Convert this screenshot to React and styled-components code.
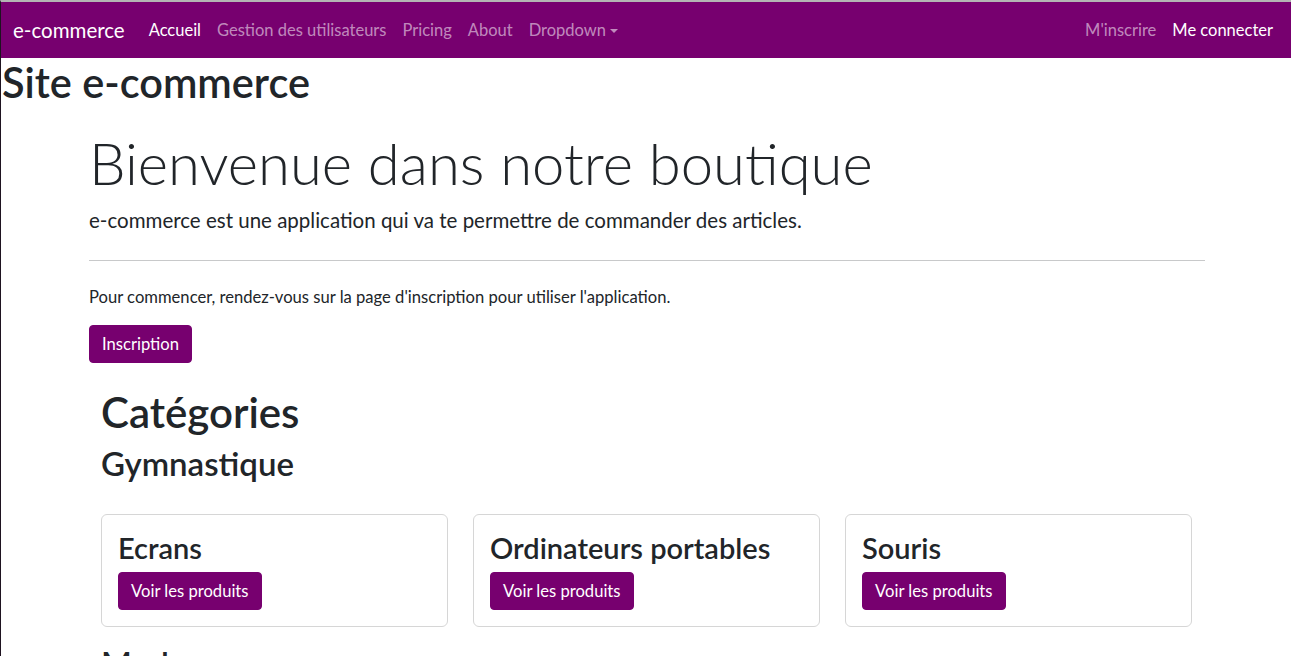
import React from 'react';
import styled, { createGlobalStyle } from 'styled-components';

const purple = '#77006f';
const ink = '#212529';
const font = `Lato, "Noto Sans", "Liberation Sans", sans-serif`;

const GlobalStyle = createGlobalStyle`
  html, body {
    margin: 0;
    padding: 0;
    background: #fff;
  }
  body {
    font-family: ${font};
    color: ${ink};
    font-size: 16.6px;
    line-height: 1.5;
  }
  * {
    box-sizing: border-box;
  }
`;

const categories = [
  { name: 'Gymnastique', items: ['Ecrans', 'Ordinateurs portables', 'Souris'] },
  { name: 'Mode', items: ['Chemises', 'Pantalons', 'Chaussures'] },
];

function Navbar() {
  return (
    <Nav>
      <Left>
        <Brand>e-commerce</Brand>
        <NavLink $active>Accueil</NavLink>
        <NavLink>Gestion des utilisateurs</NavLink>
        <NavLink>Pricing</NavLink>
        <NavLink>About</NavLink>
        <NavLink>
          Dropdown
          <Caret />
        </NavLink>
      </Left>
      <Right>
        <NavLink>M'inscrire</NavLink>
        <NavLink $active>Me connecter</NavLink>
      </Right>
    </Nav>
  );
}

function CategoryCard({ title }) {
  return (
    <Card>
      <CardTitle>{title}</CardTitle>
      <Button>Voir les produits</Button>
    </Card>
  );
}

export default function App() {
  return (
    <>
      <GlobalStyle />
      <Page>
        <Navbar />
        <SiteTitle>Site e-commerce</SiteTitle>
        <Jumbotron>
          <Display>Bienvenue dans notre boutique</Display>
          <Lead>e-commerce est une application qui va te permettre de commander des articles.</Lead>
          <Rule />
          <Text>Pour commencer, rendez-vous sur la page d'inscription pour utiliser l'application.</Text>
          <Button>Inscription</Button>
        </Jumbotron>
        <Categories>
          <SectionTitle>Catégories</SectionTitle>
          {categories.map((cat) => (
            <div key={cat.name}>
              <GroupTitle>{cat.name}</GroupTitle>
              <CardGrid>
                {cat.items.map((item) => (
                  <CategoryCard key={item} title={item} />
                ))}
              </CardGrid>
            </div>
          ))}
        </Categories>
      </Page>
    </>
  );
}

const Page = styled.div`
  min-height: 100vh;
  border-top: 2px solid #b4b4b4;
  border-left: 1px solid #1e1320;
  overflow: hidden;
`;

const Nav = styled.nav`
  height: 56px;
  padding: 0 10px 0 12px;
  display: flex;
  align-items: center;
  justify-content: space-between;
  background: ${purple};
`;

const Left = styled.div`
  display: flex;
  align-items: center;
`;

const Right = styled.div`
  display: flex;
  align-items: center;
`;

const Brand = styled.span`
  margin-right: 16px;
  font-size: 20.5px;
  color: #fff;
  line-height: 30px;
`;

const NavLink = styled.span`
  padding: 0 8px;
  display: inline-flex;
  align-items: center;
  font-size: 16.5px;
  line-height: 24px;
  color: ${({ $active }) => ($active ? '#fff' : 'rgba(255, 255, 255, 0.55)')};
`;

const Caret = styled.span`
  margin-left: 4px;
  margin-top: 1px;
  border-top: 4.5px solid rgba(255, 255, 255, 0.55);
  border-left: 4.5px solid transparent;
  border-right: 4.5px solid transparent;
`;

const SiteTitle = styled.h1`
  margin: 0;
  padding-left: 1px;
  font-size: 41.5px;
  font-weight: 600;
  line-height: 48px;
`;

const Jumbotron = styled.section`
  width: 1116px;
  margin: 22px 0 0 88px;
`;

const Display = styled.h1`
  margin: 0;
  font-size: 58px;
  font-weight: 300;
  line-height: 70px;
`;

const Lead = styled.p`
  margin: 7px 0 0;
  font-size: 20.5px;
  font-weight: 400;
  line-height: 30px;
`;

const Rule = styled.hr`
  margin: 25px 0 24px;
  border: 0;
  border-top: 1px solid #c8c9ca;
`;

const Text = styled.p`
  margin: 0 0 16px;
  line-height: 24px;
`;

const Button = styled.button`
  align-self: flex-start;
  height: 38px;
  padding: 0 12px;
  border: 1px solid ${purple};
  border-radius: 4px;
  background: ${purple};
  color: #fff;
  font-family: ${font};
  font-size: 16.6px;
  line-height: 24px;
`;

const Categories = styled.section`
  margin: 25px 0 0 100px;
`;

const SectionTitle = styled.h1`
  margin: 0 0 8px;
  font-size: 42px;
  font-weight: 600;
  line-height: 48px;
`;

const GroupTitle = styled.h2`
  margin: 0 0 32px;
  font-size: 33px;
  font-weight: 600;
  line-height: 38px;
`;

const CardGrid = styled.div`
  width: 1091px;
  margin-bottom: 17px;
  display: grid;
  grid-template-columns: repeat(3, 1fr);
  gap: 25px;
`;

const Card = styled.div`
  height: 113px;
  padding: 16px;
  display: flex;
  flex-direction: column;
  border: 1px solid #d6d6d6;
  border-radius: 6px;
`;

const CardTitle = styled.h3`
  margin: 0 0 7px;
  font-size: 29px;
  font-weight: 600;
  line-height: 34px;
`;
